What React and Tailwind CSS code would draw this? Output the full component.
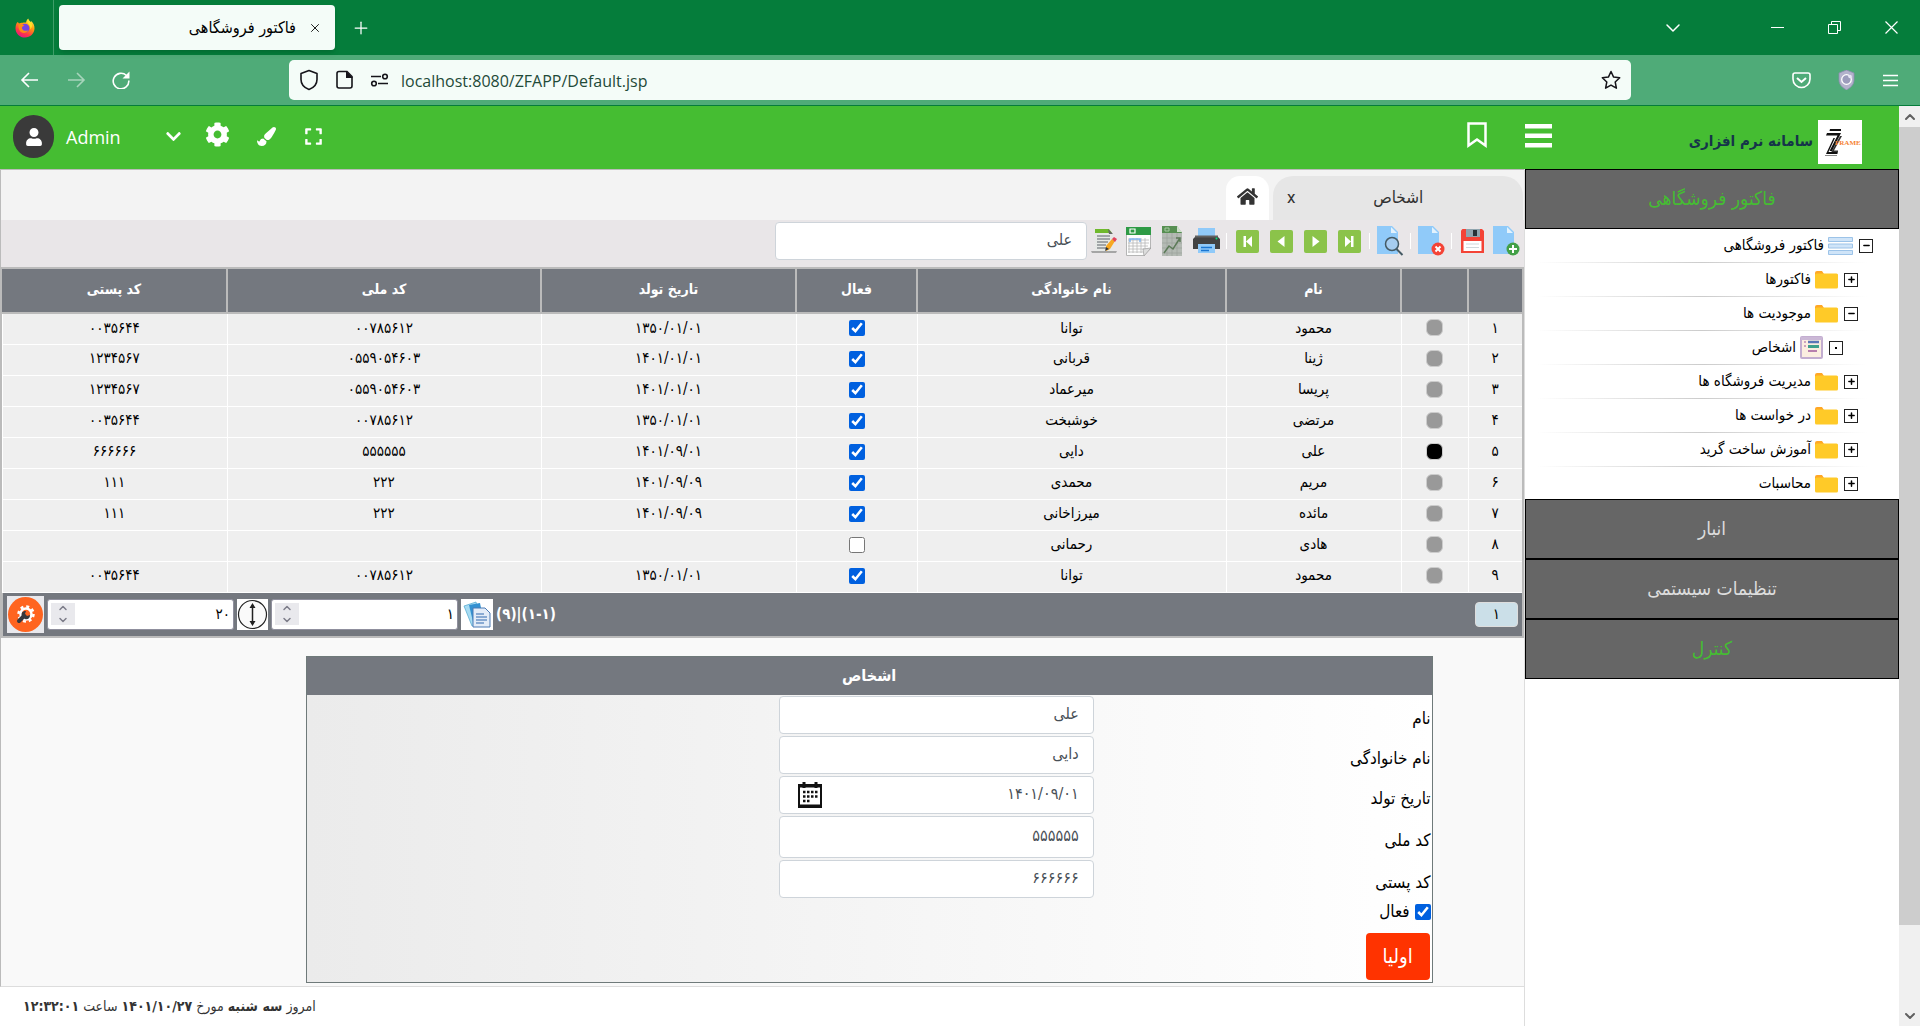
import React, { useState } from 'react';
import { ChevronDown, ChevronUp, Minus, Plus, X } from 'lucide-react';
import { FaHome, FaCog, FaPaintBrush, FaUser, FaChevronDown, FaExpand } from 'react-icons/fa';

const people = [
    { n: '۱', name: 'محمود', family: 'توانا', active: true, birth: '۱۳۵۰/۰۱/۰۱', code: '۰۰۷۸۵۶۱۲', postal: '۰۰۳۵۶۴۴' },
    { n: '۲', name: 'ژینا', family: 'قربانی', active: true, birth: '۱۴۰۱/۰۱/۰۱', code: '۰۵۵۹۰۵۴۶۰۳', postal: '۱۲۳۴۵۶۷' },
    { n: '۳', name: 'پریسا', family: 'میرعماد', active: true, birth: '۱۴۰۱/۰۱/۰۱', code: '۰۵۵۹۰۵۴۶۰۳', postal: '۱۲۳۴۵۶۷' },
    { n: '۴', name: 'مرتضی', family: 'خوشبخت', active: true, birth: '۱۳۵۰/۰۱/۰۱', code: '۰۰۷۸۵۶۱۲', postal: '۰۰۳۵۶۴۴' },
    { n: '۵', name: 'علی', family: 'دایی', active: true, birth: '۱۴۰۱/۰۹/۰۱', code: '۵۵۵۵۵۵', postal: '۶۶۶۶۶۶' },
    { n: '۶', name: 'مریم', family: 'محمدی', active: true, birth: '۱۴۰۱/۰۹/۰۹', code: '۲۲۲', postal: '۱۱۱' },
    { n: '۷', name: 'مائده', family: 'میرزاخانی', active: true, birth: '۱۴۰۱/۰۹/۰۹', code: '۲۲۲', postal: '۱۱۱' },
    { n: '۸', name: 'هادی', family: 'رحمانی', active: false, birth: '', code: '', postal: '' },
    { n: '۹', name: 'محمود', family: 'توانا', active: true, birth: '۱۳۵۰/۰۱/۰۱', code: '۰۰۷۸۵۶۱۲', postal: '۰۰۳۵۶۴۴' },
];

const columns = [
    { title: '', width: 'w-[54px]' },
    { title: '', width: 'w-[67px]' },
    { title: 'نام', width: 'w-[175px]' },
    { title: 'نام خانوادگی', width: 'w-[309px]' },
    { title: 'فعال', width: 'w-[121px]' },
    { title: 'تاریخ تولد', width: 'w-[255px]' },
    { title: 'کد ملی', width: 'w-[314px]' },
    { title: 'کد پستی', width: 'w-[225px]' },
];

const tree = [
    { label: 'فاکتور فروشگاهی', sign: '-', icon: 'list', pad: 'pr-[26px]' },
    { label: 'فاکتورها', sign: '+', icon: 'folder', pad: 'pr-[41px]' },
    { label: 'موجودیت ها', sign: '-', icon: 'folder', pad: 'pr-[41px]' },
    { label: 'اشخاص', sign: '.', icon: 'form', pad: 'pr-[56px]' },
    { label: 'مدیریت فروشگاه ها', sign: '+', icon: 'folder', pad: 'pr-[41px]' },
    { label: 'در خواست ها', sign: '+', icon: 'folder', pad: 'pr-[41px]' },
    { label: 'آموزش ساخت گرید', sign: '+', icon: 'folder', pad: 'pr-[41px]' },
    { label: 'محاسبات', sign: '+', icon: 'folder', pad: 'pr-[41px]' },
];

const FirefoxLogo = () => (
    <svg width="20" height="20" viewBox="0 0 20 20">
        <defs>
            <linearGradient id="fox" x1="0.8" y1="0" x2="0.3" y2="1">
                <stop offset="0" stopColor="#fff44f" />
                <stop offset="0.4" stopColor="#ff980e" />
                <stop offset="0.75" stopColor="#ff3647" />
                <stop offset="1" stopColor="#e31587" />
            </linearGradient>
        </defs>
        <path d="M2.2 4.2c.8 0 1.400.6 1.800 1.200 1-.6 2.400-.9 3.600-.6.900-.4 2.800-.500 3.400-.2.300-1.800 1-3 2.200-4.200.500 1.700 1.300 2.600 2.500 3.600.3-.2.400-.5.400-.9 2.200 1.900 3.500 4.500 3.400 7.400-.1 5-4.300 9-9.500 9S.500 15.400.500 10.400c0-2.500.6-4.700 1.700-6.200z" fill="url(#fox)" />
        <circle cx="10" cy="10.200" r="4.400" fill="#7542e5" />
        <path d="M3.500 7c2-1.300 4.500-1 6 .8-1.600.2-2.400.9-2.600 2.200.8 2.800 3.500 3.600 6.300 2.200-1.600 3.600-6.900 3.600-8.700 0C3.700 10.500 3.300 8.700 3.500 7z" fill="#ff8a16" />
        <path d="M13 1c-1.200 2.200-.8 4 .8 5.500 1.300 1.300 1.800 3 1.300 5 2.700-2.400 2.400-5.700.4-7.500C14.200 3 13.400 2.100 13 1z" fill="#ffe226" />
    </svg>
);

const ZLogo = () => (
    <svg width="44" height="44" viewBox="0 0 44 44" className="bg-white">
        <path d="M12 9h11v2H11.500z" fill="#111" />
        <path d="M9 13h14l-9 18h-2.500l8-15.500H8z" fill="#111" />
        <path d="M22 16h2l-8 14.500h4v2h-7z" fill="#333" />
        <path d="M8 34l7.500-16H17l-6.500 14h9v2z" fill="#111" />
        <path d="M7 35.500h12" stroke="#888" />
        <text x="17" y="25" fontSize="7" fontWeight="700" fontFamily="Liberation Serif, serif" fill="#f58233">FRAME</text>
    </svg>
);

const NavPage = ({ d }) => (
    <svg width="23" height="23" viewBox="0 0 23 23">
        <rect width="23" height="23" rx="2" fill="#8bc34a" />
        <path d={d} fill="#fff" />
    </svg>
);

const PageShape = () => (
    <>
        <path d="M1 0h15l6 6v22H1z" fill="#90caf9" />
        <path d="M15 1l6 6h-6z" fill="#e3f2fd" />
    </>
);

const AddIcon = () => (
    <svg width="28" height="30" viewBox="0 0 28 30">
        <PageShape />
        <circle cx="21" cy="23" r="6.500" fill="#43a047" />
        <path d="M21 19v8M17 23h8" stroke="#fff" strokeWidth="2" />
    </svg>
);

const DeleteIcon = () => (
    <svg width="28" height="30" viewBox="0 0 28 30">
        <PageShape />
        <circle cx="21" cy="23" r="6.500" fill="#f44336" />
        <path d="M18.500 20.500l5 5M23.500 20.500l-5 5" stroke="#fff" strokeWidth="2" />
    </svg>
);

const FindIcon = () => (
    <svg width="28" height="30" viewBox="0 0 28 30">
        <PageShape />
        <circle cx="16" cy="18" r="6.500" fill="#a6cdf0" stroke="#455a64" strokeWidth="1.500" />
        <path d="M20.500 23l6 6" stroke="#455a64" strokeWidth="2" />
    </svg>
);

const SaveIcon = () => (
    <svg width="23" height="24" viewBox="0 0 23 24">
        <path d="M0 1.500L1.500 0H21l2 2v22H0z" fill="#f44336" />
        <path d="M5 0h14v8H5z" fill="#90a4ae" />
        <path d="M12 1h4v6h-4z" fill="#263238" />
        <path d="M2.500 12h18v10h-18z" fill="#fff" />
        <path d="M5 15h13M5 18.500h13" stroke="#cfd8dc" />
    </svg>
);

const PrintIcon = () => (
    <svg width="27" height="26" viewBox="0 0 27 26">
        <path d="M5 0h17v9H5z" fill="#90caf9" />
        <path d="M3 8h21l3 3v10H0V11z" fill="#424242" />
        <path d="M2 8.500h23" stroke="#616161" strokeWidth="2" />
        <circle cx="23.500" cy="10.500" r="1" fill="#00e676" />
        <path d="M5 16h17v9H5z" fill="#90caf9" />
        <path d="M8 19.500h11M8 22.500h8" stroke="#1976d2" strokeWidth="1.500" />
    </svg>
);

const ChartIcon = () => (
    <svg width="22" height="31" viewBox="0 0 22 31">
        <path d="M1 6h20v24H1z" fill="#b4bab4" />
        <path d="M1 0h15l5 7H1z" fill="#578f52" />
        <path d="M16 0l5 6h-5z" fill="#cfe0cc" />
        <path d="M4 2h4v3H4z" fill="none" stroke="#a7c9a2" />
        <path d="M6 7v23M11 7v23M16 7v23M1 12h20M1 17h20M1 22h20M1 27h20" stroke="#999f99" strokeWidth="0.600" />
        <path d="M3 27l5-7 4 3 7-11M15 12h4v4" fill="none" stroke="#5c7a58" strokeWidth="1.500" />
    </svg>
);

const SheetIcon = () => (
    <svg width="25" height="29" viewBox="0 0 25 29">
        <path d="M.5.500h24v21l-7 7H.500z" fill="#fdfdfd" stroke="#b5b5b5" />
        <path d="M0 0h25v8H0z" fill="#2e9a45" />
        <path d="M4 2h5v4H4z" fill="none" stroke="#fff" strokeWidth="1.200" />
        <path d="M3 11v15M7 11v15M11 11v15M15 11v15M19 11v11M2 13h21M2 16h21M2 19h20M2 22h16M2 25h15" stroke="#b8b8b8" strokeWidth="0.800" />
        <path d="M4 15v-3h10v3" fill="none" stroke="#7fb4f0" strokeWidth="1.500" />
        <path d="M25 21l-8 1 1 7z" fill="#dcdcdc" stroke="#999" strokeWidth="0.700" />
    </svg>
);

const EditIcon = () => (
    <svg width="26" height="25" viewBox="0 0 26 25">
        <path d="M4 0h14l4 4v18H4z" fill="#e6e8e6" />
        <path d="M4 0h14l3 4H4z" fill="#6fb92c" />
        <path d="M17 0l5 5h-4z" fill="#666" />
        <path d="M6 7h13M6 10h13M6 13h11M6 16h9M6 19h10" stroke="#8a8f93" strokeWidth="1.300" />
        <path d="M0 22h26l-1 2H1z" fill="#a5a5a5" />
        <path d="M15 17l6-7 3 2-5 8-4 2z" fill="#f7a823" />
        <path d="M21 10l2-2 3 2-2 3z" fill="#e2455c" />
        <path d="M15 18l-1 4 4-2z" fill="#333" />
    </svg>
);

const WrenchIcon = () => (
    <svg width="37" height="37" viewBox="0 0 37 37">
        <rect width="37" height="37" fill="#e9e9ed" />
        <circle cx="18.500" cy="18.500" r="17.500" fill="#ff641f" />
        <circle cx="19" cy="18" r="5.500" fill="none" stroke="#fff" strokeWidth="2.500" />
        <circle cx="19" cy="18" r="7.500" fill="none" stroke="#fff" strokeWidth="2.500" strokeDasharray="3 2.890" />
        <path d="M12 25l5-5" stroke="#37393d" strokeWidth="4" strokeLinecap="round" />
        <path d="M15 21c-1-4 0-6 4-6l-1 3 2 2 3-1c0 4-3 5-5 4z" fill="#37393d" />
    </svg>
);

const HeightIcon = () => (
    <svg width="31" height="31" viewBox="0 0 31 31">
        <rect width="31" height="31" fill="#fff" />
        <circle cx="15.500" cy="15.500" r="14" fill="#fafafa" stroke="#222" strokeWidth="1.200" />
        <path d="M15.500 6v19" stroke="#222" strokeWidth="1.500" />
        <path d="M15.500 4l3 5h-6zM15.500 27l3-5h-6z" fill="#222" />
    </svg>
);

const PagesIcon = () => (
    <svg width="32" height="31" viewBox="0 0 32 31">
        <rect width="32" height="31" fill="#fff" />
        <path d="M3 7l12-4 5 20-9 4z" fill="#a7dcf3" stroke="#4ea6cf" strokeWidth="0.700" />
        <path d="M8 6l11-2 4 20-10 3z" fill="#3391d2" />
        <path d="M12 9h12l5 5v14H12z" fill="#e3ecf8" stroke="#4a7ab5" />
        <path d="M15 15h8M15 18h11M15 21h11M15 24h8" stroke="#6c94c6" strokeWidth="1.300" />
    </svg>
);

const CalendarIcon = () => (
    <svg width="26" height="28" viewBox="0 0 26 28">
        <path d="M2 4h22v22H2z" fill="#fff" stroke="#111" strokeWidth="2" />
        <path d="M2 5h22M2 25h22" stroke="#111" strokeWidth="3" />
        <path d="M7 1v6M19 1v6" stroke="#111" strokeWidth="3" />
        <path d="M6 11h15M6 15.500h15M6 20h7" stroke="#111" strokeWidth="2.500" strokeDasharray="2.500 1.500" />
    </svg>
);

const TreeIcon = ({ type }) => {
    if (type === 'list') {
        return (
            <svg width="25" height="18" viewBox="0 0 25 18">
                <path d="M.500.500h24v4H.500zM.500 7h24v4H.500zM.500 13.500h24v4H.500z" fill="#cfe4f8" stroke="#9cc3e8" />
            </svg>
        );
    }
    if (type === 'form') {
        return (
            <svg width="23" height="23" viewBox="0 0 23 23">
                <rect x="1" y="1" width="21" height="21" rx="1" fill="#fbeee0" stroke="#c3aed0" strokeWidth="2" />
                <path d="M1 1h21v3H1z" fill="#cbb8d6" />
                <path d="M8 6h11" stroke="#5b76b8" strokeWidth="2.500" />
                <path d="M8 10.500h11" stroke="#3fa08c" strokeWidth="3" />
                <path d="M8 15h9" stroke="#a05a9c" strokeWidth="1.500" />
                <path d="M4 6h2M4 10h2" stroke="#a05a9c" />
            </svg>
        );
    }
    return (
        <svg width="23" height="18" viewBox="0 0 23 18">
            <path d="M0 2q0-2 2-2h5l2 3h12q2 0 2 2v4H0z" fill="#ffa726" />
            <rect y="2.500" width="23" height="15" rx="1.500" fill="#ffca28" />
        </svg>
    );
};

const ToolButton = ({ title, children }) => (
    <button type="button" aria-label={title} className="flex h-8 w-[34px] shrink-0 items-center justify-center">{children}</button>
);

const Separator = () => <span className="mx-[3px] h-4 w-px shrink-0 bg-white" />;

const Spinner = ({ label, value, onChange }) => (
    <div dir="ltr" className="flex h-[31px] w-[187px] items-center rounded-[3px] border border-[#8f8f9d] bg-white px-[3px]">
        <div className="flex h-[22px] w-6 shrink-0 flex-col items-center justify-center bg-[#e9e9ed] text-[#7d7d8a]">
            <button type="button" aria-label={`${label} +`}><ChevronUp size={12} strokeWidth={3} /></button>
            <button type="button" aria-label={`${label} -`}><ChevronDown size={12} strokeWidth={3} /></button>
        </div>
        <input aria-label={label} value={value} onChange={e => onChange(e.target.value)} className="w-full min-w-0 bg-transparent text-right text-[15px] text-black outline-none" />
    </div>
);

const BrowserChrome = () => (
    <div dir="ltr" className="text-white">
        <div className="flex h-[55px] bg-[#057d3b]">
            <div className="flex w-[54px] items-center justify-center border-r border-[#3f9d68] pr-1"><FirefoxLogo /></div>
            <div className="mt-[5px] ml-[5px] flex h-[45px] w-[276px] items-center justify-end gap-3 rounded-[4px] bg-[#f4fcf8] pr-[13px] text-black shadow-md">
                <span dir="rtl" className="text-[16px]">فاکتور فروشگاهی</span>
                <button type="button" aria-label="Close tab"><X size={14} strokeWidth={1.5} /></button>
            </div>
            <button type="button" aria-label="New tab" className="ml-4"><Plus size={20} strokeWidth={1.5} /></button>
            <div className="ml-auto flex items-center">
                <button type="button" aria-label="List tabs" className="mr-16"><ChevronDown size={24} strokeWidth={1.5} /></button>
                <button type="button" aria-label="Minimize" className="flex w-[57px] justify-center">
                    <svg width="13" height="13" viewBox="0 0 13 13" stroke="#fff"><path d="M0 6.500h13" /></svg>
                </button>
                <button type="button" aria-label="Restore" className="flex w-[57px] justify-center">
                    <svg width="13" height="13" viewBox="0 0 13 13" fill="none" stroke="#fff"><path d="M.500 3.500h9v9h-9zM3.500 3.500v-3h9v9h-3" /></svg>
                </button>
                <button type="button" aria-label="Close" className="flex w-[57px] justify-center">
                    <svg width="13" height="13" viewBox="0 0 13 13" stroke="#fff" strokeWidth="1.200"><path d="M.500.500l12 12M12.500.500l-12 12" /></svg>
                </button>
            </div>
        </div>
        <div className="flex h-[51px] items-center border-b border-[#057d3b] bg-[#4fab78]">
            <div className="flex w-[289px] shrink-0 items-center gap-[26px] pl-5">
                <button type="button" aria-label="Back">
                    <svg width="20" height="18" viewBox="0 0 20 18" fill="none" stroke="#fff" strokeWidth="1.600"><path d="M9 2L2 9l7 7M2 9h16" /></svg>
                </button>
                <button type="button" aria-label="Forward" className="opacity-50">
                    <svg width="20" height="18" viewBox="0 0 20 18" fill="none" stroke="#fff" strokeWidth="1.600"><path d="M11 2l7 7-7 7M18 9H2" /></svg>
                </button>
                <button type="button" aria-label="Reload">
                    <svg width="18" height="18" viewBox="0 0 18 18" fill="none" stroke="#fff" strokeWidth="1.600"><path d="M14.500 4.500A7.800 7.800 0 1 0 16.800 9.500" /><path d="M17.500.500v7h-7z" fill="#fff" stroke="none" /></svg>
                </button>
            </div>
            <div className="flex h-10 flex-1 items-center rounded-[5px] bg-[#f4fcf8] px-[10px] text-[#15141a]">
                <svg width="20" height="22" viewBox="0 0 20 22" fill="none" stroke="#15141a" strokeWidth="1.600"><path d="M10 1.500l8 3v6c0 5-4 8.500-8 10-4-1.500-8-5-8-10v-6z" strokeLinejoin="round" /></svg>
                <svg width="17" height="20" viewBox="0 0 17 20" fill="none" stroke="#15141a" strokeWidth="1.600" className="ml-[17px]"><path d="M3 1.500h8l5 5V16q0 2-2 2H3q-2 0-2-2V3.500q0-2 2-2z" /><path d="M10 1v7h7z" fill="#15141a" stroke="none" /></svg>
                <svg width="19" height="14" viewBox="0 0 19 14" fill="none" stroke="#15141a" strokeWidth="1.600" className="mr-3 ml-[17px]"><path d="M1 3.500h10M8 10.500h10" /><circle cx="15" cy="3.500" r="2.300" /><circle cx="4" cy="10.500" r="2.300" /></svg>
                <input aria-label="Address" defaultValue="localhost:8080/ZFAPP/Default.jsp" className="min-w-0 flex-1 bg-transparent pt-[2px] font-['Open_Sans','Noto_Sans',sans-serif] text-[16px] text-[#1f4a38] outline-none" />
                <button type="button" aria-label="Bookmark this page">
                    <svg width="20" height="20" viewBox="0 0 20 20" fill="none" stroke="#15141a" strokeWidth="1.500" strokeLinejoin="round"><path d="M10 1.500l2.600 5.600 6.100.7-4.500 4.200 1.200 6.200-5.400-3.100-5.400 3.100 1.200-6.200L1.300 7.800l6.100-.7z" /></svg>
                </button>
            </div>
            <div className="flex w-[289px] shrink-0 items-center justify-end gap-[27px] pr-[21px]">
                <button type="button" aria-label="Pocket">
                    <svg width="19" height="17" viewBox="0 0 19 17" fill="none" stroke="#fff" strokeWidth="1.600"><path d="M3 1h13q2 0 2 2v4a8.500 8.500 0 0 1-17 0V3q0-2 2-2z" /><path d="M5 6l4.500 4L14 6" strokeWidth="2" /></svg>
                </button>
                <button type="button" aria-label="Shield">
                    <svg width="17" height="20" viewBox="0 0 17 20"><path d="M8.500 0L16 3v7c0 5-4 8-7.500 10C5 18 1 15 1 10V3z" fill="#b3b2cc" stroke="#8d8bb0" strokeWidth="0.800" /><circle cx="8.500" cy="9.500" r="4.800" fill="#9c9cbc" stroke="#fff" strokeWidth="1.300" /><circle cx="12" cy="6.500" r="1.800" fill="#e6e6f4" /></svg>
                </button>
                <button type="button" aria-label="Application menu">
                    <svg width="17" height="13" viewBox="0 0 17 13" stroke="#fff" strokeWidth="1.500"><path d="M1 1.500h15M1 6.500h15M1 11.500h15" /></svg>
                </button>
            </div>
        </div>
    </div>
);

const AppHeader = () => (
    <header dir="ltr" className="flex h-[63px] bg-[#45bd32] text-white">
        <div className="flex flex-1 items-center pb-[2px] pl-[13px]">
            <span className="flex h-[43px] w-[41px] items-center justify-center rounded-full bg-[#3a3a3a]"><FaUser size={18} /></span>
            <span className="ml-3 font-['Open_Sans','Noto_Sans',sans-serif] text-lg">Admin</span>
            <button type="button" aria-label="Account" className="ml-11"><FaChevronDown size={17} /></button>
            <button type="button" aria-label="Settings" className="ml-[23px] pb-1"><FaCog size={25} /></button>
            <button type="button" aria-label="Theme" className="ml-[27px]"><FaPaintBrush size={19} /></button>
            <button type="button" aria-label="Full screen" className="ml-[28px]"><FaExpand size={19} /></button>
            <button type="button" aria-label="Bookmark" className="mr-[38px] ml-auto pb-1">
                <svg width="20" height="26" viewBox="0 0 20 26" fill="none" stroke="#fff" strokeWidth="2.500"><path d="M1.500 1.500h17v22L10 17.500l-8.500 6z" /></svg>
            </button>
        </div>
        <div className="flex w-[374px] items-center">
            <button type="button" aria-label="Menu" className="pb-1">
                <svg width="27" height="25" viewBox="0 0 27 25" fill="#fff"><path d="M0 1h27v4.500H0zM0 10.500h27V15H0zM0 20h27v4.500H0z" /></svg>
            </button>
            <span dir="rtl" className="mt-2 mr-[5px] ml-auto text-[15px] font-bold whitespace-nowrap text-[#15344a]">سامانه نرم افزاری</span>
            <span className="mt-2 mr-[37px]"><ZLogo /></span>
        </div>
    </header>
);

const Sidebar = () => (
    <aside className="w-[375px] shrink-0 border-l border-[#dddddd] bg-white">
        <button type="button" className="block h-[60px] w-full border border-black bg-[#666] pb-[2px] text-[19px] text-[#45bd32]">فاکتور فروشگاهی</button>
        <ul>
            {tree.map(item => (
                <li key={item.label} className="last:mb-[-2px]">
                    <div className={`flex h-[33px] items-center ${item.pad}`}>
                        <button type="button" aria-label={item.label} className="ml-[6px] flex size-[14px] items-center justify-center border-[1.5px] border-[#222]">
                            {item.sign === '.' && <span className="size-[2px] bg-black" />}
                            {item.sign === '-' && <Minus size={9} strokeWidth={4} />}
                            {item.sign === '+' && <Plus size={9} strokeWidth={4} />}
                        </button>
                        <a href="#tree" className="flex items-center gap-1 text-[15px] text-black"><TreeIcon type={item.icon} />{item.label}</a>
                    </div>
                    <div className="mr-8 ml-3 h-px bg-linear-to-r from-white via-[#cccccc] to-white" />
                </li>
            ))}
        </ul>
        {['انبار', 'تنظیمات سیستمی'].map(t => (
            <button key={t} type="button" className="block h-[60px] w-full border border-black bg-[#666] pb-[2px] text-[19px] text-[#dddddd]">{t}</button>
        ))}
        <button type="button" className="block h-[60px] w-full border border-black bg-[#666] pb-[2px] text-[19px] text-[#45bd32]">کنترل</button>
    </aside>
);

const Toolbar = () => {
    const [search, setSearch] = useState('علی');
    return (
        <div className="flex h-[47px] items-start bg-[#e9e6e8] pt-[2px] pr-px">
            <div className="flex items-center pt-[3px]">
                <ToolButton title="جدید"><AddIcon /></ToolButton>
                <ToolButton title="ذخیره"><SaveIcon /></ToolButton>
                <Separator />
                <ToolButton title="حذف"><DeleteIcon /></ToolButton>
                <Separator />
                <ToolButton title="جستجو"><FindIcon /></ToolButton>
                <Separator />
                <ToolButton title="آخرین"><NavPage d="M7 6l6 5.500L7 17zM13 6h2.500v11H13z" /></ToolButton>
                <ToolButton title="بعدی"><NavPage d="M8.500 6l7 5.500-7 5.500z" /></ToolButton>
                <ToolButton title="قبلی"><NavPage d="M14.500 6l-7 5.500 7 5.500z" /></ToolButton>
                <ToolButton title="اولین"><NavPage d="M16 6l-6 5.500 6 5.500zM10 6H7.500v11H10z" /></ToolButton>
                <Separator />
                <ToolButton title="چاپ"><PrintIcon /></ToolButton>
                <ToolButton title="نمودار"><ChartIcon /></ToolButton>
                <ToolButton title="اکسل"><SheetIcon /></ToolButton>
                <ToolButton title="ویرایش"><EditIcon /></ToolButton>
            </div>
            <input aria-label="جستجو" value={search} onChange={e => setSearch(e.target.value)} className="h-[38px] w-[312px] rounded-[4px] border border-[#ced4da] bg-white px-[14px] pb-1 text-[16px] text-[#495057]" />
        </div>
    );
};

const PeopleGrid = () => {
    const [selected, setSelected] = useState(4);
    const [page, setPage] = useState('۱');
    const [size, setSize] = useState('۲۰');
    return (
        <div className="border-2 border-[#bbbbbb]">
            <table className="w-full table-fixed border-collapse text-center text-[15px] text-black">
                <thead>
                    <tr className="h-11 border-b-2 border-[#bbbbbb] bg-[#74787f] text-[14px] text-white">
                        {columns.map((c, i) => <th key={i} className={`border-l-2 border-[#bbbbbb] pb-[2px] last:border-l-0 ${c.width}`}>{c.title}</th>)}
                    </tr>
                </thead>
                <tbody className="bg-[#efefef]">
                    {people.map((p, i) => (
                        <tr key={i} className="h-[31px] border-b border-white *:border-l *:border-white *:pb-[2px]">
                            <td>{p.n}</td>
                            <td>
                                <input type="radio" name="row" aria-label={p.n} checked={selected === i} onChange={() => setSelected(i)} className="mx-auto block size-[17px] appearance-none rounded-[6px] border border-[#cccccc] bg-[#999] checked:bg-black" />
                            </td>
                            <td>{p.name}</td>
                            <td>{p.family}</td>
                            <td><input type="checkbox" aria-label={`فعال ${p.n}`} defaultChecked={p.active} className="mx-auto block size-4 accent-[#0060df]" /></td>
                            <td>{p.birth}</td>
                            <td>{p.code}</td>
                            <td>{p.postal}</td>
                        </tr>
                    ))}
                </tbody>
            </table>
            <div className="flex h-[43px] items-center justify-between bg-[#74787f] px-1">
                <button type="button" className="h-[25px] w-[43px] rounded-[4px] border border-[#dddddd] bg-[#cbdfe8] text-[15px] text-black">۱</button>
                <div dir="ltr" className="flex items-center gap-[3px]">
                    <button type="button" aria-label="تنظیمات"><WrenchIcon /></button>
                    <Spinner label="تعداد در صفحه" value={size} onChange={setSize} />
                    <button type="button" aria-label="ارتفاع"><HeightIcon /></button>
                    <Spinner label="صفحه" value={page} onChange={setPage} />
                    <button type="button" aria-label="صفحه ها"><PagesIcon /></button>
                    <span dir="ltr" className="text-[15px] font-bold text-white">(۹)|(۱-۱)</span>
                </div>
            </div>
        </div>
    );
};

const Field = ({ id, label, value, tall, children }) => (
    <div className="mb-[2px] grid grid-cols-[30%_28%_1fr] items-center">
        <label htmlFor={id} className="pt-2 text-[17px] text-black">{label}</label>
        <div className="relative">
            <input id={id} defaultValue={value} className={`w-full rounded-[4px] border border-[#ced4da] bg-white px-[14px] pb-[2px] text-[16px] text-[#495057] ${tall ? 'h-[42px]' : 'h-[38px]'}`} />
            {children}
        </div>
    </div>
);

const PersonForm = () => (
    <form className="mt-[18px] mr-[6%] w-[74%] border border-[#6f7a7a] bg-linear-to-l from-white to-[#ebebeb]" onSubmit={e => e.preventDefault()}>
        <h2 className="flex h-[38px] items-center justify-center bg-[#74787f] text-[16px] font-bold text-white">اشخاص</h2>
        <div className="px-px pt-px pb-[2px]">
            <Field id="name" label="نام" value="علی" />
            <Field id="family" label="نام خانوادگی" value="دایی" />
            <Field id="birth" label="تاریخ تولد" value="۱۴۰۱/۰۹/۰۱">
                <button type="button" aria-label="تقویم" className="absolute top-[5px] left-[18px]"><CalendarIcon /></button>
            </Field>
            <Field id="code" label="کد ملی" value="۵۵۵۵۵۵" tall />
            <Field id="postal" label="کد پستی" value="۶۶۶۶۶۶" />
            <label className="flex h-6 items-center gap-[5px] text-[17px] text-black">
                <input type="checkbox" defaultChecked className="size-4 accent-[#0060df]" />
                فعال
            </label>
            <button type="submit" className="mt-[9px] mr-px block h-[47px] w-16 rounded-[4px] bg-[#ff3300] text-[20px] text-white">اولیا</button>
        </div>
    </form>
);

const Scrollbar = () => (
    <div className="flex w-[21px] shrink-0 flex-col items-center bg-[#f0f0f0] text-[#606060]">
        <span className="flex h-[21px] items-center"><ChevronUp size={16} strokeWidth={3} /></span>
        <span className="w-full flex-[798] bg-[#cdcdcd]" />
        <span className="flex-[80]" />
        <span className="flex h-[21px] items-center"><ChevronDown size={16} strokeWidth={3} /></span>
    </div>
);

export default function App() {
    return (
        <div dir="rtl" className="flex min-h-screen flex-col bg-white font-['DejaVu_Sans_Condensed','DejaVu_Sans',sans-serif]">
            <BrowserChrome />
            <div dir="ltr" className="flex flex-1">
                <div className="flex min-w-0 flex-1 flex-col">
                    <AppHeader />
                    <div dir="rtl" className="flex flex-1">
                        <Sidebar />
                        <div className="flex min-w-0 flex-1 flex-col">
                            <main className="flex-1 border-b border-l border-b-[#dddddd] border-l-[#bbbbbb] bg-[#f9f9f9]">
                                <div className="flex h-[51px] items-end gap-1 border-t border-[#bbbbbb] bg-[#f3f3f3] pr-px text-[#333]">
                                    <div className="flex h-[44px] w-[250px] items-center rounded-t-[20px] bg-[#e6e6e6] pl-[14px]">
                                        <a href="#people" className="flex-1 pr-[22px] text-center text-[17px]">اشخاص</a>
                                        <button type="button" className="font-['Roboto','DejaVu_Sans',sans-serif] text-[17px]">x</button>
                                    </div>
                                    <a href="#home" aria-label="خانه" className="flex h-[44px] w-[43px] items-center justify-center rounded-t-[14px] bg-white pb-1"><FaHome size={21} /></a>
                                </div>
                                <Toolbar />
                                <PeopleGrid />
                                <PersonForm />
                            </main>
                            <footer className="flex h-[39px] items-center justify-end bg-white pl-[23px] text-[14px] text-[#333]">
                                <p>امروز <b>سه شنبه</b> مورخ <b>۱۴۰۱/۱۰/۲۷</b> ساعت <b>۱۲:۳۲:۰۱</b></p>
                            </footer>
                        </div>
                    </div>
                </div>
                <Scrollbar />
            </div>
        </div>
    );
}
